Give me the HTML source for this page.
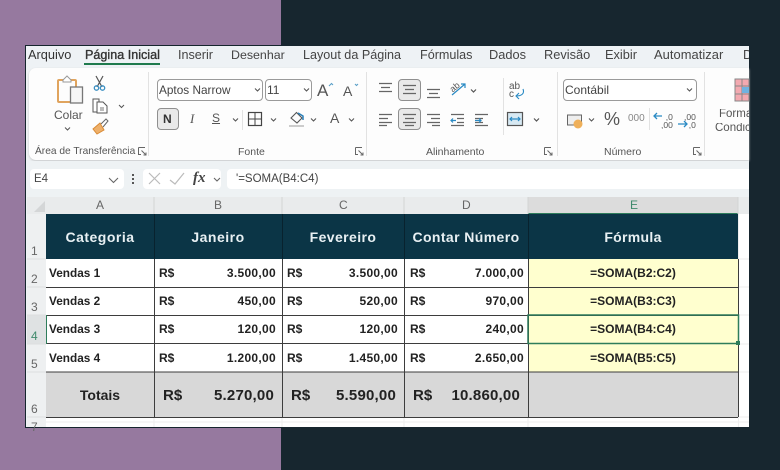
<!DOCTYPE html>
<html><head><meta charset="utf-8">
<style>
html,body{margin:0;padding:0;background:#17262f}
#p{position:relative;width:780px;height:470px;overflow:hidden;background:#17262f;font-family:"Liberation Sans",sans-serif;filter:blur(.35px)}
#l{position:absolute;left:0;top:0;width:281px;height:470px;background:#96799f}
#w{position:absolute;left:25px;top:45px;width:725px;height:383px;background:#eef2f4;overflow:hidden;box-sizing:border-box;border:1px solid #16252e}
.t{position:absolute;white-space:nowrap;line-height:1}
.a{position:absolute}
svg{position:absolute;left:0;top:0}
.btn{position:absolute;background:#e9e9e9;border:1px solid #8f8f8f;border-radius:4px;box-sizing:border-box}
.inp{position:absolute;background:#fff;border:1px solid #9a9a9a;border-radius:4px;box-sizing:border-box}
.b{font-weight:bold}
</style></head><body>
<div id="p"><div id="l"></div>
<div id="w"></div>

<!-- tabs -->
<div class="a" style="left:27px;top:46px;width:722px;height:22px;background:#eef2f5"></div>
<div class="t" style="left:28px;top:49px;font-size:12.800px;color:#333">Arquivo</div>
<div class="t" style="left:85px;top:49px;font-size:12.600px;color:#333;-webkit-text-stroke:.35px #333">Página Inicial</div>
<div class="a" style="left:84px;top:63px;width:76px;height:2px;background:#1f7a4d"></div>
<div class="t" style="left:178px;top:49px;font-size:12.600px;color:#444">Inserir</div>
<div class="t" style="left:231px;top:49px;font-size:12.400px;color:#444">Desenhar</div>
<div class="t" style="left:303px;top:49px;font-size:12.600px;color:#444">Layout da Página</div>
<div class="t" style="left:420px;top:49px;font-size:12.600px;color:#444">Fórmulas</div>
<div class="t" style="left:489px;top:49px;font-size:12.800px;color:#444">Dados</div>
<div class="t" style="left:544px;top:49px;font-size:12.800px;color:#444">Revisão</div>
<div class="t" style="left:605px;top:49px;font-size:12.800px;color:#444">Exibir</div>
<div class="t" style="left:654px;top:49px;font-size:12.900px;letter-spacing:.05px;color:#444">Automatizar</div>
<div class="t" style="left:743px;top:49px;font-size:12.800px;color:#444;width:6px;overflow:hidden">D</div>

<!-- ribbon -->
<div class="a" style="left:29px;top:68px;width:720px;height:92px;background:#fdfdfd;border-radius:7px 0 0 7px;box-shadow:0 1px 2px #c4c6c8"></div>

<svg width="780" height="470" fill="none">
 <g stroke="#e2e2e2"><path d="M148.500 72V156M366.500 72V156M557.500 72V156M704.500 72V156"/><path d="M242.500 110V130M503.500 78V135M649.500 108V130"/></g>
 <rect x="58" y="80" width="18" height="22" rx="1" stroke="#e0a45e" stroke-width="2"/>
 <path d="M63 80L67 76L71 80V82H63Z" fill="#fff" stroke="#999"/>
 <rect x="70.500" y="87" width="12" height="16" fill="#f6f6f6" stroke="#777" stroke-width="1.300"/>
 <path d="M96 76L102 87M103 76L97 87" stroke="#555" stroke-width="1.200"/>
 <circle cx="96.500" cy="88" r="2.200" stroke="#3a8fc2" stroke-width="1.300"/><circle cx="102.500" cy="88" r="2.200" stroke="#3a8fc2" stroke-width="1.300"/>
 <path d="M93 99H99V112H93Z" stroke="#555" fill="#fff"/><path d="M97 102H103L107 106V113H97Z" stroke="#555" fill="#fff"/><path d="M100 108H104M100 110H104" stroke="#777"/>
 <path d="M119 105L121.500 107.500L124 105" stroke="#555"/>
 <path d="M93 129L100 123L104 130L97 134Z" fill="#eeb06a" stroke="#d98a34"/><path d="M101 124L106 119L108 121L103 127" fill="#fff" stroke="#666"/>
 <path d="M65 127.500L67.500 130L70 127.500" stroke="#555"/>
 <path d="M138.500 147.500H145M138.500 147.500V154.500H141M141.500 150.500L146 155M146 152.500V155H143.500" stroke="#666"/>
 <path d="M355.500 147.500H362M355.500 147.500V154.500H358M358.500 150.500L363 155M363 152.500V155H360.500" stroke="#666"/>
 <path d="M544.500 147.500H551M544.500 147.500V154.500H547M547.500 150.500L552 155M552 152.500V155H549.500" stroke="#666"/>
 <path d="M693.500 147.500H700M693.500 147.500V154.500H696M696.500 150.500L701 155M701 152.500V155H698.500" stroke="#666"/>
</svg>

<!-- font group -->
<div class="inp" style="left:157px;top:79px;width:106px;height:22px"></div>
<div class="t" style="left:159px;top:85px;font-size:11.800px;color:#444">Aptos Narrow</div>
<div class="inp" style="left:265px;top:79px;width:47px;height:22px"></div>
<div class="t" style="left:267px;top:84px;font-size:12px;color:#444">11</div>
<div class="btn" style="left:157px;top:108px;width:22px;height:22px"></div>
<div class="t b" style="left:163px;top:113px;font-size:12px;color:#333">N</div>
<div class="t" style="left:190px;top:112px;font-size:13px;color:#555;font-style:italic;font-family:'Liberation Serif',serif">I</div>
<div class="t" style="left:212px;top:112px;font-size:12px;color:#555;text-decoration:underline">S</div>
<div class="t" style="left:317px;top:82px;font-size:17px;color:#555">A</div>
<div class="t" style="left:343px;top:84px;font-size:14px;color:#555">A</div>
<div class="t" style="left:330px;top:111px;font-size:14px;color:#555">A</div>
<svg width="780" height="470" fill="none">
 <path d="M255 88.500L257.500 91L260 88.500M304 88.500L306.500 91L309 88.500M233 118.500L235.500 121L238 118.500M271 118.500L273.500 121L276 118.500M311 118.500L313.500 121L316 118.500M349 118.500L351.500 121L354 118.500" stroke="#555" stroke-width="1.100"/>
 <rect x="248.500" y="112.500" width="13" height="13" stroke="#444" stroke-width="1.200"/><path d="M255 112V126M248 119H262" stroke="#444"/>
 <path d="M329 86L331.500 83.500L333 85M355 84L356.500 85.500L358 84" stroke="#5aa0c8" stroke-width="1.100"/>
 <path d="M291 118L296.500 112.500L302 118L297 123Z" stroke="#555" stroke-width="1.100"/><path d="M298 113L303 116V120" stroke="#2a7fb8" stroke-width="1.500"/>
 <path d="M289 126H304" stroke="#ccc" stroke-width="2"/>
</svg>

<!-- alignment -->
<div class="btn" style="left:398px;top:79px;width:23px;height:22px"></div>
<div class="btn" style="left:398px;top:108px;width:23px;height:22px"></div>
<svg width="780" height="470" fill="none" stroke="#666" stroke-width="1.200">
 <path d="M379 83.500H392M381 87.500H390M379 91.500H392"/>
 <path d="M403 85.500H416M405 89.500H414M403 93.500H416"/>
 <path d="M427 89.500H440M429 93.500H438M427 97.500H440"/>
 <path d="M379 114.500H392M379 118.500H388M379 122.500H392M379 125.500H387"/>
 <path d="M403 114.500H416M405 118.500H414M403 122.500H416M405 125.500H414"/>
 <path d="M427 114.500H440M431 118.500H440M427 122.500H440M432 125.500H440"/>
 <path d="M451 114.500H464M457 118.500H464M457 122.500H464M451 125.500H464"/>
 <path d="M475 114.500H488M475 118.500H483M475 122.500H483M475 125.500H488"/>
 <path d="M451 120.500H456M453 118.500L451 120.500L453 122.500" stroke="#2a8ac4"/>
 <path d="M475 120.500H481M479 118.500L481 120.500L479 122.500" stroke="#2a8ac4"/>
 <path d="M452 95L465 84M461 84H465V88" stroke="#2a8ac4"/>
 <path d="M471 89.500L473.500 92L476 89.500" stroke="#555"/>
 <path d="M523 89C525 94 521 96 516 96M519 93L516 96L519 99" stroke="#2a8ac4" stroke-width="1.100"/>
 <path d="M534 118.500L536.500 121L539 118.500" stroke="#555"/>
 <rect x="507.500" y="112.500" width="15" height="13" stroke="#555" fill="#d7e9f3"/>
 <path d="M510 119H520M512 117L510 119L512 121M518 117L520 119L518 121" stroke="#2a8ac4"/>
</svg>
<div class="t" style="left:450px;top:83px;font-size:9px;color:#555;transform:rotate(-40deg)">ab</div>
<div class="t" style="left:509px;top:83px;font-size:10px;color:#555;line-height:8px;width:14px;white-space:normal">ab c</div>

<!-- number -->
<div class="inp" style="left:563px;top:79px;width:134px;height:22px"></div>
<div class="t" style="left:565px;top:84px;font-size:12px;color:#444">Contábil</div>
<div class="t" style="left:604px;top:110px;font-size:18px;color:#555">%</div>
<div class="t" style="left:628px;top:114px;font-size:10px;color:#888">000</div>
<div class="t" style="left:661px;top:113px;font-size:8.500px;line-height:8px;color:#555;white-space:pre">  ,0
,00</div>
<div class="t" style="left:684px;top:113px;font-size:8.500px;line-height:8px;color:#555;white-space:pre">,00
  ,0</div>
<svg width="780" height="470" fill="none">
 <path d="M687 88.500L689.500 91L692 88.500M589 118.500L591.500 121L594 118.500" stroke="#555" stroke-width="1.100"/>
 <rect x="567.500" y="115" width="14" height="10" stroke="#666" fill="#eee"/>
 <circle cx="578" cy="124" r="4.500" fill="#efb05a"/>
 <path d="M654 116H662M657 113L654 116L657 119" stroke="#2a8ac4" stroke-width="1.300"/>
 <path d="M678 124H687M684 121L687 124L684 127" stroke="#2a8ac4" stroke-width="1.300"/>
 <path d="M735 79H749V101H735Z" fill="#f3a9b0" stroke="#888"/><path d="M735 86H749M735 94H749M742 79V101" stroke="#888"/><rect x="742" y="87" width="7" height="6" fill="#6fb2e0"/>
</svg>
<div class="t" style="left:719px;top:109px;font-size:11.500px;color:#555;width:30px;overflow:hidden">Formatação</div>
<div class="t" style="left:715px;top:123px;font-size:11.500px;color:#555;width:34px;overflow:hidden">Condicional</div>

<!-- clip labels -->
<div class="t" style="left:54px;top:109px;font-size:12px;color:#555">Colar</div>
<div class="t" style="left:35px;top:147px;font-size:10.200px;color:#555">Área de Transferência</div>
<div class="t" style="left:238px;top:147px;font-size:10.500px;color:#555">Fonte</div>
<div class="t" style="left:426px;top:147px;font-size:10.500px;color:#555">Alinhamento</div>
<div class="t" style="left:604px;top:147px;font-size:10.500px;color:#555">Número</div>

<!-- formula bar -->
<div class="a" style="left:27px;top:161px;width:722px;height:36px;background:#eef2f4"></div>
<div class="a" style="left:30px;top:169px;width:94px;height:20px;background:#fff;border-radius:4px"></div>
<div class="t" style="left:34px;top:174px;font-size:11.500px;color:#444">E4</div>
<div class="a" style="left:143px;top:169px;width:78px;height:20px;background:#fff;border-radius:4px"></div>
<div class="a" style="left:227px;top:169px;width:522px;height:20px;background:#fff;border-radius:4px 0 0 4px"></div>
<div class="t" style="left:236px;top:174px;font-size:11.500px;color:#444">'=SOMA(B4:C4)</div>
<div class="t" style="left:193px;top:171px;font-size:15px;color:#444;font-style:italic;font-family:'Liberation Serif',serif;font-weight:bold">fx</div>
<svg width="780" height="470" fill="none">
 <path d="M109 178L113.500 182.500L118 178M214 178L217 181L220 178" stroke="#666" stroke-width="1.100"/>
 <path d="M149 173L160 184M160 173L149 184" stroke="#bbb" stroke-width="1.200"/>
 <path d="M170 180L175 184L184 173" stroke="#bbb" stroke-width="1.200"/>
 <path d="M133 174V176M133 178V180M133 182V184" stroke="#555" stroke-width="2"/>
</svg>

<!-- sheet -->
<div class="a" style="left:27px;top:197px;width:722px;height:230px;background:#fff;overflow:hidden"></div>
<div class="a" style="left:27px;top:197px;width:722px;height:17px;background:#e9ebec"></div>
<div class="a" style="left:528px;top:197px;width:210px;height:16px;background:#dcdcdc;border-bottom:1px solid #2e7d5b"></div>
<div class="a" style="left:27px;top:214px;width:19px;height:213px;background:#eef0f1"></div>
<div class="a" style="left:27px;top:315px;width:19px;height:29px;background:#dfe2e3"></div>
<svg width="780" height="470" fill="none">
 <path d="M34 212L45 212L45 201Z" fill="#d4d6d7"/>
 <path d="M154 197V214M282 197V214M404 197V214M528 197V214M738 197V214" stroke="#d2d4d5"/>
 <path d="M27 259H46M27 287H46M27 315H46M27 344H46M27 372H46M27 417H46" stroke="#dcdedf"/>
 <path d="M738.500 214V427M738 259H749M738 287H749M738 315H749M738 344H749M738 372H749M738 417H749M46 422H749M154 417V427M282 417V427M404 417V427M528 417V427" stroke="#eeeeee"/>
</svg>
<div class="t" style="left:96px;top:199px;font-size:12px;color:#666">A</div>
<div class="t" style="left:214px;top:199px;font-size:12px;color:#666">B</div>
<div class="t" style="left:339px;top:199px;font-size:12px;color:#666">C</div>
<div class="t" style="left:462px;top:199px;font-size:12px;color:#666">D</div>
<div class="t" style="left:630px;top:199px;font-size:12px;color:#3f8a6c">E</div>
<div class="t" style="left:31px;top:245px;font-size:12px;color:#666">1</div>
<div class="t" style="left:31px;top:273px;font-size:12px;color:#666">2</div>
<div class="t" style="left:31px;top:301px;font-size:12px;color:#666">3</div>
<div class="t" style="left:31px;top:330px;font-size:12px;color:#3f8a6c">4</div>
<div class="t" style="left:31px;top:358px;font-size:12px;color:#666">5</div>
<div class="t" style="left:31px;top:403px;font-size:12px;color:#666">6</div>
<div class="t" style="left:31px;top:421px;font-size:12px;color:#666">7</div>

<!-- table fills -->
<div class="a" style="left:46px;top:214px;width:692px;height:45px;background:#0b3546"></div>
<div class="a" style="left:528px;top:259px;width:210px;height:113px;background:#ffffcf"></div>
<div class="a" style="left:46px;top:372px;width:692px;height:45px;background:#d8d8d8"></div>
<svg width="780" height="470" fill="none">
 <path d="M154 214V417M282 214V417M404 214V417M528 214V417" stroke="#3d3d3d" stroke-width="1" transform="translate(.5 0)"/>
 <path d="M46 287.500H738M46 315.500H738M46 343.500H738M46 372H738M46 417.500H738M738.500 259V417" stroke="#3d3d3d"/>
 <path d="M154 214V259M282 214V259M404 214V259M528 214V259" stroke="#08222e" transform="translate(.5 0)"/>
 <path d="M46.500 315V344" stroke="#2e7d5b"/>
 <rect x="528" y="315" width="210.500" height="28.500" stroke="#2e7d5b" stroke-width="1.500"/>
 <rect x="736" y="341" width="4" height="4" fill="#2e7d5b"/>
</svg>

<!-- header text -->
<div class="t b" style="left:46px;width:108px;top:230px;text-align:center;font-size:14px;color:#e8f0f3;letter-spacing:.5px">Categoria</div>
<div class="t b" style="left:154px;width:128px;top:230px;text-align:center;font-size:14px;color:#e8f0f3;letter-spacing:.5px">Janeiro</div>
<div class="t b" style="left:282px;width:122px;top:230px;text-align:center;font-size:14px;color:#e8f0f3;letter-spacing:.4px">Fevereiro</div>
<div class="t b" style="left:404px;width:124px;top:230px;text-align:center;font-size:14px;color:#e8f0f3;letter-spacing:.4px">Contar Número</div>
<div class="t b" style="left:528px;width:210px;top:230px;text-align:center;font-size:14px;color:#e8f0f3;letter-spacing:.3px">Fórmula</div>

<!-- rows -->
<div class="t b" style="left:49px;top:268px;font-size:11.800px;color:#222">Vendas 1</div>
<div class="t b" style="left:49px;top:296px;font-size:11.800px;color:#222">Vendas 2</div>
<div class="t b" style="left:49px;top:324px;font-size:11.800px;color:#222">Vendas 3</div>
<div class="t b" style="left:49px;top:353px;font-size:11.800px;color:#222">Vendas 4</div>

<div class="t b" style="left:159px;top:267px;font-size:12px;color:#222">R$</div>
<div class="t b" style="left:159px;top:295px;font-size:12px;color:#222">R$</div>
<div class="t b" style="left:159px;top:323px;font-size:12px;color:#222">R$</div>
<div class="t b" style="left:159px;top:352px;font-size:12px;color:#222">R$</div>
<div class="t b" style="left:287px;top:267px;font-size:12px;color:#222">R$</div>
<div class="t b" style="left:287px;top:295px;font-size:12px;color:#222">R$</div>
<div class="t b" style="left:287px;top:323px;font-size:12px;color:#222">R$</div>
<div class="t b" style="left:287px;top:352px;font-size:12px;color:#222">R$</div>
<div class="t b" style="left:410px;top:267px;font-size:12px;color:#222">R$</div>
<div class="t b" style="left:410px;top:295px;font-size:12px;color:#222">R$</div>
<div class="t b" style="left:410px;top:323px;font-size:12px;color:#222">R$</div>
<div class="t b" style="left:410px;top:352px;font-size:12px;color:#222">R$</div>

<div class="t b" style="right:504px;top:267px;font-size:12px;color:#222;letter-spacing:.3px">3.500,00</div>
<div class="t b" style="right:504px;top:295px;font-size:12px;color:#222;letter-spacing:.3px">450,00</div>
<div class="t b" style="right:504px;top:323px;font-size:12px;color:#222;letter-spacing:.3px">120,00</div>
<div class="t b" style="right:504px;top:352px;font-size:12px;color:#222;letter-spacing:.3px">1.200,00</div>
<div class="t b" style="right:382px;top:267px;font-size:12px;color:#222;letter-spacing:.3px">3.500,00</div>
<div class="t b" style="right:382px;top:295px;font-size:12px;color:#222;letter-spacing:.3px">520,00</div>
<div class="t b" style="right:382px;top:323px;font-size:12px;color:#222;letter-spacing:.3px">120,00</div>
<div class="t b" style="right:382px;top:352px;font-size:12px;color:#222;letter-spacing:.3px">1.450,00</div>
<div class="t b" style="right:256px;top:267px;font-size:12px;color:#222;letter-spacing:.3px">7.000,00</div>
<div class="t b" style="right:256px;top:295px;font-size:12px;color:#222;letter-spacing:.3px">970,00</div>
<div class="t b" style="right:256px;top:323px;font-size:12px;color:#222;letter-spacing:.3px">240,00</div>
<div class="t b" style="right:256px;top:352px;font-size:12px;color:#222;letter-spacing:.3px">2.650,00</div>

<div class="t b" style="left:528px;width:210px;text-align:center;top:267px;font-size:12px;color:#222">=SOMA(B2:C2)</div>
<div class="t b" style="left:528px;width:210px;text-align:center;top:295px;font-size:12px;color:#222">=SOMA(B3:C3)</div>
<div class="t b" style="left:528px;width:210px;text-align:center;top:323px;font-size:12px;color:#222">=SOMA(B4:C4)</div>
<div class="t b" style="left:528px;width:210px;text-align:center;top:352px;font-size:12px;color:#222">=SOMA(B5:C5)</div>

<!-- totals -->
<div class="t b" style="left:46px;width:108px;text-align:center;top:388px;font-size:14px;color:#222">Totais</div>
<div class="t b" style="left:163px;top:388px;font-size:15px;color:#222">R$</div>
<div class="t b" style="right:506px;top:388px;font-size:15px;color:#222;letter-spacing:.2px">5.270,00</div>
<div class="t b" style="left:291px;top:388px;font-size:15px;color:#222">R$</div>
<div class="t b" style="right:384px;top:388px;font-size:15px;color:#222;letter-spacing:.2px">5.590,00</div>
<div class="t b" style="left:413px;top:388px;font-size:15px;color:#222">R$</div>
<div class="t b" style="right:260px;top:388px;font-size:15px;color:#222;letter-spacing:.2px">10.860,00</div>
</div>
</body></html>
